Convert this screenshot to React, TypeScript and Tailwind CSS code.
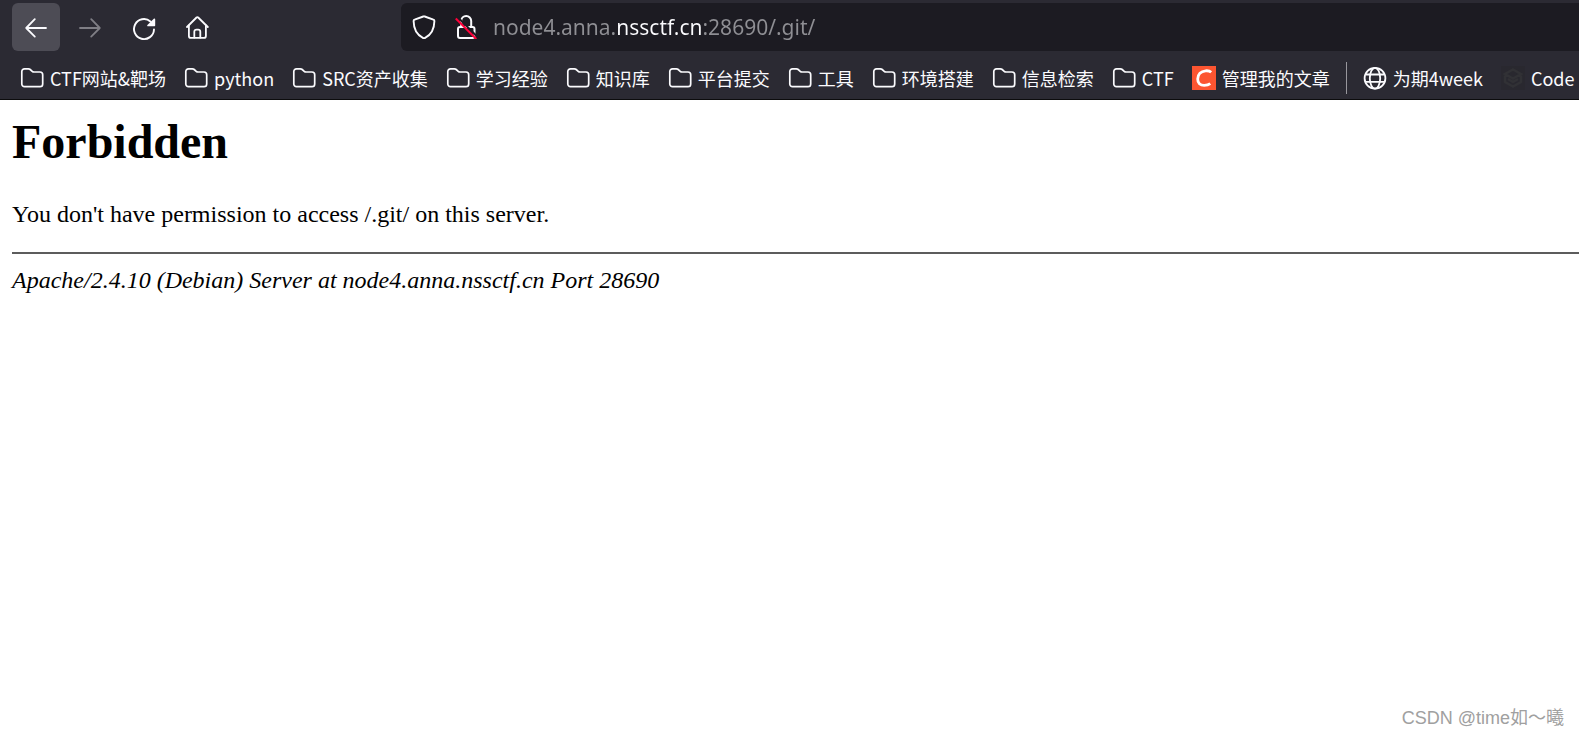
import React from 'react';

type IconKind = 'folder' | 'csdn' | 'globe' | 'cube';

interface Bookmark {
  label: string;
  icon: IconKind;
  dividerBefore?: boolean;
}

const BOOKMARKS: Bookmark[] = [
  { label: 'CTF网站&靶场', icon: 'folder' },
  { label: 'python', icon: 'folder' },
  { label: 'SRC资产收集', icon: 'folder' },
  { label: '学习经验', icon: 'folder' },
  { label: '知识库', icon: 'folder' },
  { label: '平台提交', icon: 'folder' },
  { label: '工具', icon: 'folder' },
  { label: '环境搭建', icon: 'folder' },
  { label: '信息检索', icon: 'folder' },
  { label: 'CTF', icon: 'folder' },
  { label: '管理我的文章', icon: 'csdn' },
  { label: '为期4week', icon: 'globe', dividerBefore: true },
  { label: 'Code', icon: 'cube' },
];

const BookmarkIcon: React.FC<{ kind: IconKind }> = ({ kind }) => {
  if (kind === 'csdn') {
    return (
      <svg className="size-6 shrink-0" viewBox="0 0 24 24" fill="none">
        <rect width="24" height="24" fill="#fc5531" />
        <path d="M19.200 6.2C17.800 5 15.800 4.600 13.600 4.800C8.800 5.200 5.800 8.400 5.700 13C5.600 17 8.200 19.300 12.200 19.300C14.600 19.300 16.600 18.900 18.300 17.700" stroke="#fff" strokeWidth="2.8" />
      </svg>
    );
  }
  if (kind === 'globe') {
    return (
      <svg className="size-6 shrink-0" viewBox="0 0 24 24" fill="none" stroke="#fbfbfe" strokeWidth="1.8">
        <circle cx="12" cy="12.300" r="10.400" />
        <ellipse cx="12" cy="12.300" rx="5.200" ry="10.400" />
        <path d="M2.500 8.500h19M2.500 15.800h19" />
      </svg>
    );
  }
  if (kind === 'cube') {
    return (
      <svg className="size-6 shrink-0" viewBox="0 0 24 24" fill="none" stroke="#313135" strokeWidth="2.500">
        <rect width="24" height="24" fill="#29282f" stroke="none" />
        <path d="M12 3.500l8 4.500-8 4.500-8-4.500zM4 9.500v6.500l8 4.500 8-4.500V9.500M7 13l5 3 5-3" />
      </svg>
    );
  }
  return (
    <svg className="size-6 shrink-0" viewBox="0 0 24 24" fill="none" stroke="#fbfbfe" strokeWidth="1.7">
      <path d="M4.500 2.800H8.400c.7 0 1.300.25 1.800.7l2 1.800c.5.45 1.100.7 1.800.7h6c1.500 0 2.700 1.200 2.700 2.700v9.200c0 1.500-1.200 2.700-2.700 2.700H4.500c-1.500 0-2.700-1.200-2.700-2.700V5.500c0-1.500 1.200-2.700 2.700-2.700z" />
    </svg>
  );
};

const NavBar = () => (
  <div className="flex items-center pl-3 pt-[3px]">
    <div className="flex shrink-0 gap-[6px]">
      <button aria-label="Back" className="flex size-12 items-center justify-center rounded-md bg-[#4d4c55]">
        <svg className="size-6" viewBox="0 0 24 24" fill="none" stroke="#fbfbfe" strokeWidth="1.8" strokeLinecap="round" strokeLinejoin="round">
          <path d="M22 13H2.200M10.800 4.200L2.200 13L10.800 21.600" />
        </svg>
      </button>
      <button aria-label="Forward" disabled className="flex size-12 items-center justify-center rounded-md">
        <svg className="size-6" viewBox="0 0 24 24" fill="none" stroke="#7f7e85" strokeWidth="1.8" strokeLinecap="round" strokeLinejoin="round">
          <path d="M2 13H21.800M13.200 4.200L21.800 13L13.200 21.600" />
        </svg>
      </button>
      <button aria-label="Reload" className="flex size-12 items-center justify-center rounded-md">
        <svg className="size-6 overflow-visible" viewBox="0 0 24 24" fill="none">
          <path d="M22 14.500A10 10 0 1 1 18.400 6.400" stroke="#fbfbfe" strokeWidth="1.900" strokeLinecap="round" />
          <path d="M23.200 4.600V10.600c0 .4-.3.7-.7.7h-6.600c-.7 0-1-.8-.5-1.300l6.400-6.200c.5-.5 1.400-.2 1.400.8z" fill="#fbfbfe" />
        </svg>
      </button>
      <button aria-label="Home" className="flex size-12 items-center justify-center rounded-md">
        <svg className="size-6" viewBox="0 0 24 24" fill="none" stroke="#fbfbfe" strokeWidth="1.8" strokeLinecap="round" strokeLinejoin="round">
          <path d="M1 12L10.500 2.500c.5-.5 1.200-.5 1.700 0L21.800 12" />
          <path d="M2.900 10.500v10.400c0 1.200.8 2 2 2h13c1.200 0 2-.8 2-2V10.500" />
          <path d="M8.300 22.500v-5.700c0-1.300.9-2.200 2.200-2.200h1.600c1.300 0 2.200.9 2.200 2.200v5.700" />
        </svg>
      </button>
    </div>

    {/* Address bar */}
    <div className="ml-[179px] flex h-12 min-w-0 flex-1 items-center rounded-l-md bg-[#1c1b22] pl-[11px]">
      <svg className="size-6 shrink-0" viewBox="0 0 24 24" fill="none" stroke="#fbfbfe" strokeWidth="1.900" strokeLinejoin="round">
        <path d="M11.300 1.500c.4-.2 1-.2 1.400 0l8.700 3.200c.6.2 1 .7 1 1.400C22.300 14 19 20 13.100 22.900c-.7.4-1.500.4-2.200 0C5 20 1.700 14 1.600 6.100c0-.7.4-1.200 1-1.400z" />
      </svg>
      <svg className="ml-[18px] size-6 shrink-0" viewBox="0 0 24 24" fill="none">
        <path d="M7.200 11.500V6a5 5 0 0 1 10 0v5.500" stroke="#fbfbfe" strokeWidth="2" />
        <rect x="4" y="12" width="16.500" height="11" rx="2" stroke="#fbfbfe" strokeWidth="2" />
        <path d="M4 2.500L24 22.500" stroke="#1c1b22" strokeWidth="2" />
        <path d="M1.800 3.500L22.300 24" stroke="#ff0039" strokeWidth="2" />
      </svg>
      {/* The gradient stops keep the registered domain brighter than the rest of the address */}
      <input
        type="text"
        aria-label="Address"
        defaultValue="node4.anna.nssctf.cn:28690/.git/"
        className="ml-[15px] h-10 min-w-0 flex-1 bg-[linear-gradient(to_right,#8f8f94_122px,#fbfbfe_122px,#fbfbfe_208px,#8f8f94_208px)] bg-clip-text font-['Noto_Sans',sans-serif] text-[21px] text-transparent outline-none"
      />
    </div>
  </div>
);

const BookmarksBar = () => (
  <nav className="flex h-[49px] items-center gap-[18px] overflow-hidden border-b border-[#0c0c0d] pt-[6px] pl-5 font-['Noto_Sans_CJK_SC',sans-serif] text-[18px] leading-6 text-[#fbfbfe]">
    {BOOKMARKS.map((b) => (
      <React.Fragment key={b.label}>
        {b.dividerBefore && <span className="-mx-[2px] h-8 w-px shrink-0 bg-[#98979d]" />}
        <a href="#" className="flex shrink-0 items-center gap-[6px] whitespace-nowrap">
          <BookmarkIcon kind={b.icon} />
          {b.label}
        </a>
      </React.Fragment>
    ))}
  </nav>
);

export default function App() {
  return (
    <div className="relative min-h-screen overflow-hidden bg-white">
      <header className="bg-[#2b2a33]">
        <NavBar />
        <BookmarksBar />
      </header>

      <main className="pl-3 pt-[15px] font-['Liberation_Serif',serif] text-2xl text-black">
        <h1 className="text-5xl leading-[54px] font-bold">Forbidden</h1>
        <p className="mt-[31px] leading-7">You don't have permission to access /.git/ on this server.</p>
        <hr className="mt-6 border-t-2 border-[#5c5c5c]" />
        <address className="mt-3 leading-7 italic">Apache/2.4.10 (Debian) Server at node4.anna.nssctf.cn Port 28690</address>
      </main>

      <p className="absolute right-[15px] bottom-1 font-['Liberation_Sans','Noto_Sans_CJK_SC',sans-serif] text-[18px] leading-7 text-[#a0a0a0]">
        CSDN @time如～曦
      </p>
    </div>
  );
}
